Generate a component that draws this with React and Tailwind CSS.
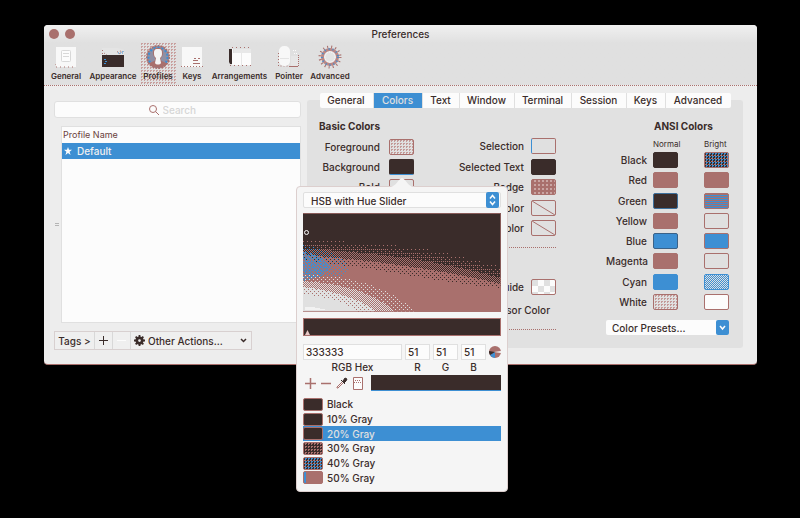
import React from "react";

const CHECK_DARK_BLUE =
  "bg-[#3a2c2a] bg-[conic-gradient(#3d8fd3_0_25%,#3a2c2a_0_50%,#a9706d_0_75%,#3a2c2a_0)] bg-[length:3px_3px]";
const DOTS_LIGHT =
  "bg-[#e0e0e0] bg-[conic-gradient(#c39a98_0_25%,transparent_0)] bg-[length:3px_3px]";

const ANSI = [
  ["Black", "bg-[#3a2c2a] border-[#3a2c2a]", CHECK_DARK_BLUE + " border-[#a9706d]"],
  ["Red", "bg-[#a9706d] border-[#a9706d]", "bg-[#a9706d] border-[#a9706d]"],
  [
    "Green",
    "bg-[#3a2c2a] border-[#3d6f9c]",
    "bg-[#a9706d] bg-[conic-gradient(from_90deg,#3d8fd3_0_50%,#a9706d_0)] bg-[length:2px_2px] border-[#a9706d]",
  ],
  ["Yellow", "bg-[#a9706d] border-[#a9706d]", "bg-[#e0e0e0] border-[#a9706d]"],
  ["Blue", "bg-[#3d8fd3] border-[#3b6288]", "bg-[#3d8fd3] border-[#a9706d]"],
  ["Magenta", "bg-[#a9706d] border-[#a9706d]", "bg-[#e0e0e0] border-[#a9706d]"],
  [
    "Cyan",
    "bg-[#3d8fd3] border-[#3d8fd3]",
    "bg-[conic-gradient(#3d8fd3_0_25%,#e0e0e0_0_50%,#3d8fd3_0_75%,#e0e0e0_0)] bg-[length:2px_2px] border-[#3d8fd3]",
  ],
  ["White", DOTS_LIGHT + " border-[#a9706d]", "bg-[#fcfcfc] border-[#a9706d]"],
];

const GRAYS = [
  ["Black", "bg-[#3a2c2a]"],
  ["10% Gray", "bg-[#3a2c2a]"],
  ["20% Gray", "bg-[#3a2c2a]"],
  ["30% Gray", "bg-[#3a2c2a] bg-[conic-gradient(#a9706d_0_25%,transparent_0)] bg-[length:3px_3px]"],
  ["40% Gray", CHECK_DARK_BLUE],
  ["50% Gray", "bg-[#a9706d] bg-[linear-gradient(90deg,#3d8fd3_0_2px,transparent_2px)]"],
];

const TABS = [
  ["General", "w-[54px]"],
  ["Colors", "w-[49px]"],
  ["Text", "w-[37px]"],
  ["Window", "w-[55px]"],
  ["Terminal", "w-[57px]"],
  ["Session", "w-[55px]"],
  ["Keys", "w-[39px]"],
  ["Advanced", "w-[65px]"],
];

function GeneralIcon() {
  return (
    <svg width="22" height="22" viewBox="0 0 22 22" aria-hidden="true">
      <path d="M1 1h20v20H1z" fill="#f8f8f8" />
      <path d="M0 18v3h21" fill="none" stroke="#a9706d" strokeDasharray="1 3" />
      <rect x="6.500" y="4.500" width="9" height="11" rx="1" fill="#fcfcfc" stroke="#d8d8d8" />
      <path d="M8 7.500h6M8 10.500h6" stroke="#d8d8d8" />
    </svg>
  );
}

function AppearanceIcon() {
  return (
    <svg width="22" height="22" viewBox="0 0 22 22" aria-hidden="true">
      <path d="M0 2h16l6 2v5H0z" fill="#e4e4e4" />
      <path d="M0.500 4v5M2 7l3 2M15 6l4-1M17 8l4-3" stroke="#a9706d" strokeDasharray="1 2" />
      <path d="M16 7h5V4" fill="none" stroke="#3d8fd3" strokeDasharray="1 1" />
      <path d="M0 9h22v12H0z" fill="#3a2c2a" />
      <path d="M2 13.500h2M3 15.500h2M2 17.500h2" stroke="#3d8fd3" />
    </svg>
  );
}

function ProfilesIcon() {
  return (
    <svg width="24" height="24" viewBox="0 0 24 24" aria-hidden="true">
      <circle cx="12" cy="12" r="11" fill="#8f8fa4" stroke="#a9706d" strokeWidth="2" strokeDasharray="2 1" />
      <circle cx="12" cy="12" r="9.500" fill="none" stroke="#3d8fd3" strokeWidth="2" strokeDasharray="2 2" />
      <path
        d="M12 3c-4 0-5 2-5 5 0 2 1 4 2 5v2c-1 2-5 2-6 4 4 5 14 5 18 0-1-2-5-2-6-4v-2c1-1 2-3 2-5 0-3-1-5-5-5z"
        fill="#a9706d"
      />
      <path d="M12 4C8 4 8 6 8 9c0 2 1 3 2 4l-1 5c1 2 5 2 6 0l-1-5c1-1 2-2 2-4 0-3 0-5-4-5z" fill="#f4f4f4" />
    </svg>
  );
}

function KeysIcon() {
  return (
    <svg width="22" height="22" viewBox="0 0 22 22" aria-hidden="true">
      <path d="M1 1h20v20H1z" fill="#f8f8f8" />
      <path d="M0 20.500h22" stroke="#a9706d" strokeDasharray="1 2" />
      <path d="M13 12.500h2M17 12.500h2M12 14.500h5M12 17.500h7" stroke="#a9706d" />
    </svg>
  );
}

function ArrangementsIcon() {
  return (
    <svg width="24" height="22" viewBox="0 0 24 22" aria-hidden="true">
      <path d="M6 3h17v17H6z" fill="#e8e8e8" />
      <path d="M4 1.500h18M2 19.500h21" stroke="#a9706d" strokeDasharray="1 3" />
      <path d="M5 7h8v12H5zM14 7h9v12h-9z" fill="#fcfcfc" />
      <path d="M1 3h3v15H2l-1-2z" fill="#3a2c2a" />
      <path d="M4.500 3v16" stroke="#fcfcfc" />
    </svg>
  );
}

function PointerIcon() {
  return (
    <svg width="24" height="24" viewBox="0 0 24 24" aria-hidden="true">
      <path d="M14 11h7v10h-7z" fill="#e6e6e6" />
      <path d="M12 21.500h9" stroke="#a9706d" />
      <path d="M21.500 21V10" fill="none" stroke="#a9706d" strokeDasharray="1 1" />
      <path d="M1.500 8v13h10" fill="none" stroke="#a9706d" strokeDasharray="1 2" />
      <rect x="2" y="1" width="11" height="20" rx="5" fill="#f8f8f8" />
      <path d="M3 13.500h9" stroke="#e4e4e4" />
      <path d="M16 5.500h3M17 8.500h3" stroke="#fcfcfc" strokeDasharray="1 1" />
    </svg>
  );
}

function AdvancedIcon() {
  return (
    <svg width="24" height="24" viewBox="0 0 24 24" aria-hidden="true">
      <circle cx="12" cy="12" r="10" fill="none" stroke="#a9706d" strokeWidth="3" strokeDasharray="1 3" />
      <circle cx="12" cy="12" r="7.500" fill="#ededed" stroke="#b98886" strokeWidth="3" />
      <circle cx="12" cy="12" r="8" fill="none" stroke="#3d8fd3" strokeWidth="2" strokeDasharray="1 3" />
      <circle cx="12" cy="12" r="5" fill="#e4e4e4" stroke="#fcfcfc" strokeDasharray="1 1" />
    </svg>
  );
}

const TOOLS = [
  ["General", "w-10", GeneralIcon],
  ["Appearance", "w-[54px]", AppearanceIcon],
  ["Profiles", "w-9", ProfilesIcon],
  ["Keys", "w-8", KeysIcon],
  ["Arrangements", "w-[63px]", ArrangementsIcon],
  ["Pointer", "w-9", PointerIcon],
  ["Advanced", "w-[46px]", AdvancedIcon],
];

function Well({ label, look }) {
  return <button aria-label={label} className={"block h-4 w-[25px] rounded-[2px] border " + look} />;
}

function ColorRow({ id, label, look, gap = "gap-[7px]", children }) {
  return (
    <div className={"flex h-4 items-center justify-end whitespace-nowrap " + gap}>
      <label htmlFor={id}>{label}</label>
      <button id={id} className={"block h-4 w-[25px] shrink-0 overflow-hidden rounded-[2px] border " + look}>
        {children}
      </button>
    </div>
  );
}

function NoColor() {
  return (
    <svg className="block h-full w-full" viewBox="0 0 23 14" aria-hidden="true">
      <path d="M0 0l23 14" stroke="#a9706d" />
    </svg>
  );
}

function SaturationField() {
  return (
    <svg
      className="mt-[5px] block h-[99px] w-full"
      viewBox="0 0 198 99"
      preserveAspectRatio="none"
      shapeRendering="crispEdges"
      role="img"
      aria-label="Saturation and brightness"
    >
      <defs>
        <pattern id="faint" width="4" height="4" patternUnits="userSpaceOnUse">
          <path d="M0 0h1v1H0z" fill="#a9706d" />
        </pattern>
        <pattern id="sparse" width="4" height="4" patternUnits="userSpaceOnUse">
          <path d="M0 0h1v1H0zM2 2h1v1H2zM2 0h1v1H2z" fill="#a9706d" />
        </pattern>
        <pattern id="half" width="2" height="2" patternUnits="userSpaceOnUse">
          <path d="M0 0h1v1H0zM1 1h1v1H1z" fill="#a9706d" />
        </pattern>
        <pattern id="dense" width="4" height="4" patternUnits="userSpaceOnUse">
          <path d="M0 0h4v4H0z" fill="#a9706d" />
          <path d="M1 0h1v1H1zM3 2h1v1H3z" fill="#3a2c2a" />
        </pattern>
        <pattern id="blue" width="4" height="4" patternUnits="userSpaceOnUse">
          <path d="M0 0h1v1H0zM2 2h1v1H2z" fill="#3d8fd3" />
        </pattern>
        <pattern id="blueDense" width="3" height="3" patternUnits="userSpaceOnUse">
          <path d="M0 0h1v1H0zM1 1h1v1H1zM2 2h1v1H2zM2 0h1v1H2z" fill="#3d8fd3" />
        </pattern>
        <pattern id="lightFaint" width="4" height="4" patternUnits="userSpaceOnUse">
          <path d="M0 0h1v1H0zM2 2h1v1H2z" fill="#e0e0e0" />
        </pattern>
        <pattern id="lightHalf" width="2" height="2" patternUnits="userSpaceOnUse">
          <path d="M0 0h1v1H0zM1 1h1v1H1z" fill="#e0e0e0" />
        </pattern>
        <pattern id="lightDense" width="4" height="4" patternUnits="userSpaceOnUse">
          <path d="M0 0h4v4H0z" fill="#e0e0e0" />
          <path d="M1 0h1v1H1zM3 2h1v1H3z" fill="#a9706d" />
        </pattern>
      </defs>
      <path d="M0 0h198v99H0z" fill="#3a2c2a" />
      <path d="M0 28Q110 26 198 54V99H0z" fill="url(#faint)" />
      <path d="M0 32Q110 32 198 59V99H0z" fill="url(#sparse)" />
      <path d="M0 36Q110 40 198 65V99H0z" fill="url(#half)" />
      <path d="M0 42Q110 50 198 71V99H0z" fill="url(#dense)" />
      <path d="M0 48Q60 54 110 63T198 75V99H0z" fill="#a9706d" />
      <path d="M0 32Q40 38 46 56Q38 68 0 74z" fill="url(#blue)" />
      <path d="M0 38Q24 45 28 54Q22 64 0 68z" fill="url(#blueDense)" />
      <path d="M0 62Q76 62 112 99H0z" fill="url(#lightFaint)" />
      <path d="M0 68Q64 72 92 99H0z" fill="url(#lightHalf)" />
      <path d="M0 74Q50 80 74 99H0z" fill="url(#lightDense)" />
      <path d="M0 81Q40 86 56 99H0z" fill="#e0e0e0" />
      <path d="M2 97v-3h8l14 3z" fill="#f2f2f2" />
      <path d="M0 0.500h198M197.500 0v99M0 98.500h198" stroke="#a9706d" opacity="0.700" />
      <circle cx="3.500" cy="19.500" r="2" fill="none" stroke="#fcfcfc" shapeRendering="auto" />
    </svg>
  );
}

function Field({ id, label, value, width }) {
  return (
    <div className={"flex flex-col " + width}>
      <input
        id={id}
        defaultValue={value}
        className="h-4 w-full border border-[#e0e0e0] bg-[#fcfcfc] px-[2px] text-[10px] outline-none"
      />
      <label htmlFor={id} className="text-center leading-[14px]">
        {label}
      </label>
    </div>
  );
}

function ColorPopover() {
  return (
    <div className="absolute top-[27px] -left-[93px] z-20 w-[212px] rounded-[4px] border border-[#dccfce] bg-[#f5f5f5] px-[6px] pt-[5px] pb-[6px]">
      <svg className="absolute -top-[10px] left-[93px]" width="24" height="10" viewBox="0 0 24 10" aria-hidden="true">
        <path d="M0 10C6 10 9 1 12 1s6 9 12 9z" fill="#f5f5f5" />
      </svg>
      <div className="relative h-4">
        <select
          aria-label="Color model"
          className="h-4 w-full appearance-none rounded-[2px] border border-[#e0e0e0] bg-[#fcfcfc] pl-[7px] outline-none"
        >
          <option>HSB with Hue Slider</option>
        </select>
        <svg className="pointer-events-none absolute top-0 right-[2px]" width="13" height="16" viewBox="0 0 13 16" aria-hidden="true">
          <rect width="13" height="16" rx="2" fill="#3d8fd3" />
          <path d="M4 6.500l2.500-3 2.500 3M4 9.500l2.500 3 2.500-3" fill="none" stroke="#fcfcfc" strokeWidth="1.500" />
        </svg>
      </div>
      <SaturationField />
      <div className="mt-[6px] flex h-[18px] items-end border border-[#a9706d] bg-[#3a2c2a] pl-px">
        <svg width="5" height="5" viewBox="0 0 5 5" aria-hidden="true">
          <path d="M2.500 0L5 5H0z" fill="#e8c9c7" />
        </svg>
      </div>
      <div className="mt-2 flex gap-[3px]">
        <Field id="hex" label="RGB Hex" value="333333" width="w-[99px]" />
        <Field id="r" label="R" value="51" width="w-[25px]" />
        <Field id="g" label="G" value="51" width="w-[25px]" />
        <Field id="b" label="B" value="51" width="w-[25px]" />
        <button aria-label="Color profile" className="flex h-4 items-center">
          <svg width="12" height="12" viewBox="0 0 12 12" aria-hidden="true">
            <circle cx="6" cy="6" r="6" fill="#a9706d" />
            <path d="M6 6L1 9a6 6 0 0 0 5 3z" fill="#3d8fd3" />
            <path d="M6 6L0 5a6 6 0 0 0 1 4z" fill="#3a2c2a" />
            <path d="M5 6l7-1v2z" fill="#f5f5f5" />
          </svg>
        </button>
      </div>
      <div className="mt-px flex h-4 items-center">
        <button aria-label="Add color" className="ml-[2px]">
          <svg width="11" height="11" viewBox="0 0 11 11" aria-hidden="true">
            <path d="M5.500 0v11M0 5.500h11" stroke="#a9706d" strokeWidth="1.500" />
          </svg>
        </button>
        <button aria-label="Remove color" className="ml-[5px]">
          <svg width="10" height="11" viewBox="0 0 10 11" aria-hidden="true">
            <path d="M0 5.500h10" stroke="#a9706d" strokeWidth="1.500" />
          </svg>
        </button>
        <button aria-label="Pick color" className="ml-[5px]">
          <svg width="12" height="12" viewBox="0 0 12 12" aria-hidden="true">
            <path d="M7 4L1 10v1h1l6-6" fill="none" stroke="#a9706d" />
            <path d="M5 3l4 4M7 4l2-3 2 1-1 2-2 2z" fill="#3a2c2a" stroke="#3a2c2a" />
          </svg>
        </button>
        <button aria-label="Palette" className="ml-[5px]">
          <svg width="10" height="13" viewBox="0 0 10 13" aria-hidden="true">
            <path d="M0.500 0.500h9v12h-9z" fill="#fcfcfc" stroke="#a9706d" />
            <path d="M1 5.500h8M2 3.500h6" stroke="#a9706d" strokeDasharray="1 1" />
          </svg>
        </button>
        <div className="ml-auto h-4 w-[130px] border-b border-[#3d8fd3] bg-[#3a2c2a]" />
      </div>
      <ul className="mt-[6px] flex h-[88px] flex-col">
        {GRAYS.map(([name, look], i) => (
          <li key={name} className="min-h-0 flex-1">
            <button
              className={
                "flex h-full w-full items-center gap-1 text-left " +
                (i === 2 ? "bg-[#3d8fd3] text-[#e0e0e0]" : "")
              }
            >
              <span className={"h-[13px] w-5 rounded-[2px] border border-[#a9706d] " + look} />
              {name}
            </button>
          </li>
        ))}
      </ul>
    </div>
  );
}

function Sidebar() {
  return (
    <section className="w-[257px] shrink-0 pt-[15px] pl-[10px]">
      <div className="flex h-[17px] items-center justify-center gap-1 rounded-[3px] border border-[#e0e0e0] bg-[#fcfcfc]">
        <svg width="10" height="10" viewBox="0 0 10 10" aria-hidden="true">
          <circle cx="4" cy="4" r="3.500" fill="none" stroke="#a9706d" />
          <path d="M6.500 6.500L10 10" stroke="#a9706d" />
        </svg>
        <input
          type="text"
          aria-label="Search profiles"
          placeholder="Search"
          className="w-11 bg-transparent outline-none placeholder:text-[#d6d6d6] placeholder:opacity-100"
        />
      </div>
      <div className="mt-2 flex">
        <div className="h-[197px] w-[7px] shrink-0 py-[97px] pl-px">
          <div className="h-[3px] w-1 border-y border-[#b5b5b5]" />
        </div>
        <div className="h-[197px] flex-1 border border-[#e0e0e0] bg-[#fcfcfc]">
          <table className="w-full border-collapse text-left">
            <thead>
              <tr className="h-4">
                <th className="p-0 pl-px align-middle text-[9px] leading-3 font-normal text-[#6b3f3c]">Profile Name</th>
              </tr>
            </thead>
            <tbody>
              <tr className="h-4 bg-[#3d8fd3] text-[#f0f0f0]">
                <td className="p-0 pl-[2px] leading-4">
                  <span className="flex items-center gap-[5px]">
                    <svg width="8" height="8" viewBox="0 0 10 10" aria-hidden="true">
                      <path d="M5 0l1.300 3.500H10L7 5.800 8.200 10 5 7.500 1.800 10 3 5.800 0 3.500h3.700z" fill="#fcfcfc" />
                    </svg>
                    Default
                  </span>
                </td>
              </tr>
            </tbody>
          </table>
        </div>
      </div>
      <div className="mt-2 flex h-[19px] w-[198px] items-stretch border border-[#d8d0d0] bg-[#efefef]">
        <button className="w-10 border-r border-[#d8d8d8]">Tags &gt;</button>
        <button aria-label="Add profile" className="flex w-[18px] items-center justify-center border-r border-[#d8d8d8]">
          <svg width="9" height="9" viewBox="0 0 9 9" aria-hidden="true">
            <path d="M4.500 0v9M0 4.500h9" stroke="#3a2c2a" />
          </svg>
        </button>
        <button aria-label="Remove profile" className="flex w-[18px] items-center justify-center border-r border-[#d8d8d8]">
          <svg width="9" height="9" viewBox="0 0 9 9" aria-hidden="true">
            <path d="M0 4.500h9" stroke="#fcfcfc" />
          </svg>
        </button>
        <button className="flex flex-1 items-center pr-1 pl-[3px]">
          <svg width="11" height="11" viewBox="0 0 12 12" aria-hidden="true">
            <path d="M6 0v12M0 6h12M1.800 1.800l8.400 8.400M10.200 1.800l-8.400 8.400" stroke="#3a2c2a" strokeWidth="2" />
            <circle cx="6" cy="6" r="3" fill="#efefef" stroke="#3a2c2a" strokeWidth="3" />
          </svg>
          <span className="ml-[3px] flex-1 text-left">Other Actions...</span>
          <svg width="7" height="5" viewBox="0 0 7 5" aria-hidden="true">
            <path d="M1 1l2.500 2.500L6 1" fill="none" stroke="#3a2c2a" strokeWidth="1.500" />
          </svg>
        </button>
      </div>
    </section>
  );
}

function ColorsPanel() {
  return (
    <section className="ml-[6px] flex-1 pt-[7px] pr-[14px]">
      <div className="relative z-10 flex justify-center">
        <nav className="flex h-[15px] divide-x divide-[#e0e0e0] rounded-[2px] bg-[#fcfcfc]">
          {TABS.map(([name, width]) => (
            <button
              key={name}
              className={width + " leading-[15px] " + (name === "Colors" ? "bg-[#3d8fd3] text-[#e0e0e0]" : "")}
            >
              {name}
            </button>
          ))}
        </nav>
      </div>
      <div className="-mt-2 flex rounded-[3px] bg-[#e1e1e1] pt-[18px] pr-[14px] pb-3 pl-3">
        <div className="flex-1">
          <div className="flex">
            <div className="w-[95px]">
              <h2 className="h-4 font-bold whitespace-nowrap">Basic Colors</h2>
              <div className="mt-[5px] flex flex-col gap-1">
                <ColorRow id="fg" label="Foreground" gap="gap-[9px]" look={DOTS_LIGHT + " border-[#a9706d]"} />
                <div className="relative">
                  <ColorRow id="bg" label="Background" gap="gap-[9px]" look="bg-[#3a2c2a] border-[#3a2c2a] border-b-[#3d8fd3]" />
                  <div className="absolute top-0 right-0 w-[25px]">
                    <ColorPopover />
                  </div>
                </div>
                <ColorRow id="bold" label="Bold" gap="gap-[9px]" look="bg-[#e0e0e0] border-[#a9706d]" />
              </div>
            </div>
            <div className="mt-5 flex h-[98px] flex-1 flex-col justify-between">
              <ColorRow id="selection" label="Selection" look="bg-[#e0e0e0] border-[#a9706d] border-l-[#3d8fd3]" />
              <ColorRow id="seltext" label="Selected Text" look="bg-[#3a2c2a] border-[#3a2c2a]" />
              <ColorRow
                id="badge"
                label="Badge"
                look="bg-[#a9706d] bg-[conic-gradient(#c9a5a3_0_25%,transparent_0)] bg-[length:4px_4px] border-[#a9706d]"
              />
              <ColorRow id="tab" label="Tab Color" look="bg-[#e0e0e0] border-[#a9706d]">
                <NoColor />
              </ColorRow>
              <ColorRow id="underline" label="Underline Color" look="bg-[#e0e0e0] border-[#a9706d]">
                <NoColor />
              </ColorRow>
            </div>
          </div>
          <hr className="mt-[11px] border-dotted border-[#a9706d]" />
          <h2 className="mt-3 h-4 font-bold">Cursor Colors</h2>
          <div className="mt-[3px]">
            <ColorRow
              id="guide"
              label="Cursor Guide"
              look="border-[#a9706d] bg-[repeating-conic-gradient(#fcfcfc_0_25%,#e0e0e0_0_50%)] bg-[length:12px_12px]"
            />
          </div>
          <p className="mt-[7px] h-4 pr-[6px] text-right">Smart Cursor Color</p>
          <hr className="mt-[11px] border-dotted border-[#a9706d]" />
        </div>
        <div className="ml-[50px] w-[123px]">
          <h2 className="h-4 pl-12 font-bold whitespace-nowrap">ANSI Colors</h2>
          <table className="h-[178px] w-full table-fixed border-collapse">
            <thead>
              <tr className="h-4 text-left text-[8px] leading-3">
                <th className="w-[47px] p-0" aria-label="Color" />
                <th className="w-[51px] p-0 pt-1 font-normal">Normal</th>
                <th className="w-[25px] p-0 pt-1 font-normal">Bright</th>
              </tr>
            </thead>
            <tbody>
              {ANSI.map(([name, normal, bright]) => (
                <tr key={name} className="h-5">
                  <th className="p-0 pr-[6px] text-right font-medium">{name}</th>
                  <td className="p-0">
                    <Well label={name + " normal"} look={normal} />
                  </td>
                  <td className="p-0">
                    <Well label={name + " bright"} look={bright} />
                  </td>
                </tr>
              ))}
            </tbody>
          </table>
          <div className="relative mt-2 h-4">
            <select
              aria-label="Color presets"
              className="h-[15px] w-full appearance-none rounded-[2px] bg-[#fcfcfc] pl-[6px] outline-none"
            >
              <option>Color Presets...</option>
            </select>
            <svg className="pointer-events-none absolute top-0 right-0" width="13" height="15" viewBox="0 0 13 15" aria-hidden="true">
              <rect width="13" height="15" rx="2" fill="#3d8fd3" />
              <path d="M4 6l2.500 3L9 6" fill="none" stroke="#fcfcfc" strokeWidth="1.500" />
            </svg>
          </div>
        </div>
      </div>
    </section>
  );
}

export default function App() {
  return (
    <main className="min-h-screen bg-black pt-[25px] pr-[43px] pl-11 font-['Inter','Liberation_Sans',sans-serif] text-[10px] leading-4 font-medium text-[#3a2c2a]">
      <div className="rounded-[4px] border-b border-[#a9706d] bg-[#ededed]">
        <header className="rounded-t-[4px] border-b border-dotted border-[#a9706d] bg-linear-to-b from-[#f0f0f0] to-[#e0e0e0] to-30%">
          <div className="flex h-[18px] items-center px-[5px]">
            <div className="flex w-11 gap-[6px]">
              <button aria-label="Close" className="h-[10px] w-[10px] rounded-full bg-[#a9706d]" />
              <button aria-label="Minimize" className="h-[10px] w-[10px] rounded-full bg-[#a9706d]" />
            </div>
            <h1 className="flex-1 pr-11 text-center">Preferences</h1>
          </div>
          <div className="flex h-[42px] pl-[2px]">
            {TOOLS.map(([name, width, Icon]) => (
              <button
                key={name}
                className={
                  "flex flex-col items-center text-[8px] leading-3 font-semibold whitespace-nowrap " +
                  width +
                  (name === "Profiles"
                    ? " bg-[#e0e0e0] bg-[conic-gradient(#c9a09e_0_25%,transparent_0)] bg-[length:3px_3px]"
                    : "")
                }
              >
                <span className="flex h-[27px] items-center">
                  <Icon />
                </span>
                {name}
              </button>
            ))}
          </div>
        </header>
        <div className="flex pb-[14px]">
          <Sidebar />
          <ColorsPanel />
        </div>
      </div>
    </main>
  );
}
